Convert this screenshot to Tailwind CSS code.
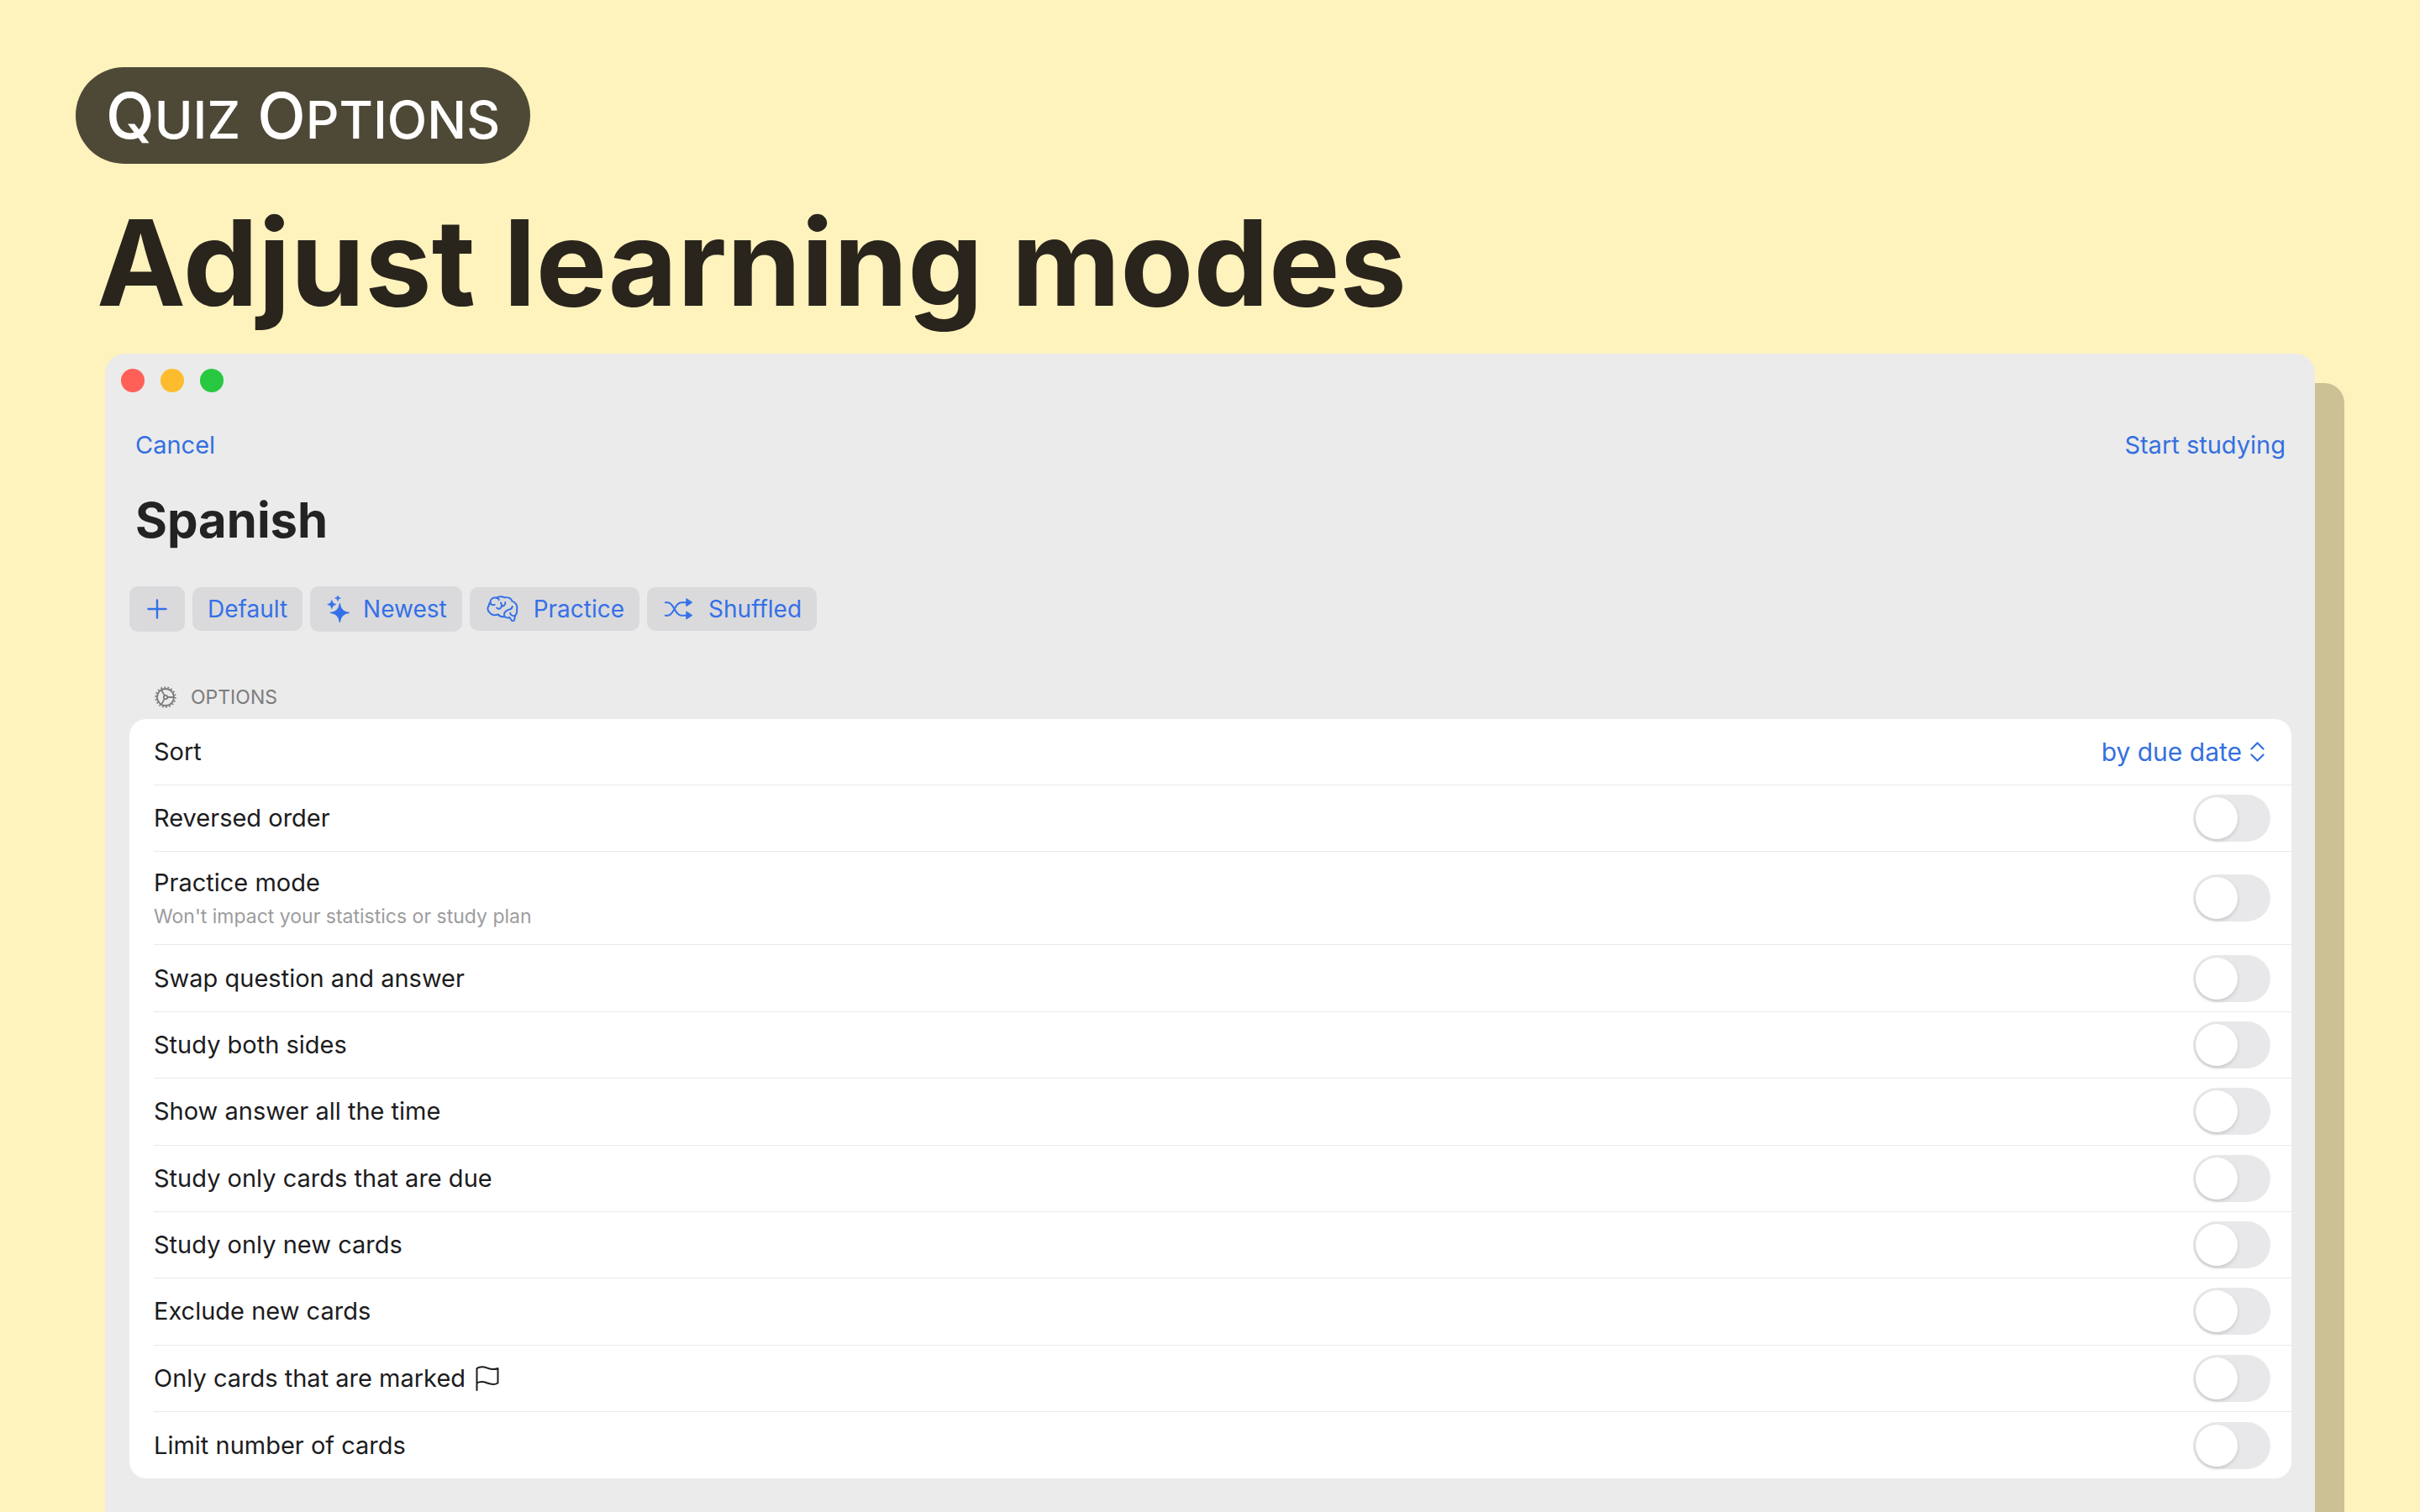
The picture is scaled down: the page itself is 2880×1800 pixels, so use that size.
<!DOCTYPE html>
<html lang="en">
<head>
    <meta charset="UTF-8">
    <meta name="viewport" content="width=device-width, initial-scale=1">
    <title>Quiz Options</title>
    <script src="https://cdn.jsdelivr.net/npm/@tailwindcss/browser@4"></script>
</head>
<body class="flex flex-col h-screen overflow-hidden bg-[#fef2bd] font-['Inter',sans-serif] text-[29px] leading-[36px] text-[#1c1c1e]">
    <header class="px-[90px] pt-20">
        <p class="flex w-fit items-center h-[115px] px-9 rounded-full bg-[#4e4937] text-white text-[75px] leading-none font-medium">
            <span>Q<span class="text-[62px] uppercase">uiz</span> O<span class="text-[62px] uppercase">ptions</span></span>
        </p>
        <h1 class="mt-[37px] px-[25px] text-[142px] leading-[160px] font-bold text-[#29241c]">Adjust learning modes</h1>
    </header>

    <main class="grow mx-[125px] mt-[29px] pl-[29px] pr-7 rounded-t-[24px] bg-[#ebebeb] shadow-[35px_35px_0_#cbc194]">
        <div class="flex gap-[19px] pt-[18px] -ml-[10px]">
            <span class="size-7 rounded-full bg-[#fe5f57]"></span>
            <span class="size-7 rounded-full bg-[#fdbc2e]"></span>
            <span class="size-7 rounded-full bg-[#28c840]"></span>
        </div>

        <nav class="flex justify-between mt-[45px] px-[7px] text-[#3470e0]">
            <button type="button">Cancel</button>
            <button type="button">Start studying</button>
        </nav>

        <h2 class="mt-9 px-[7px] text-[58px] leading-[70px] font-bold text-[#232323]">Spanish</h2>

        <div class="flex items-center gap-[9px] mt-[44px] text-[28px] text-[#3470e8]">
            <button type="button" aria-label="Add preset" class="flex items-center justify-center w-[66px] h-[54px] rounded-[10px] bg-[#dadadc]">
                <svg class="size-6" viewBox="0 0 24 24" fill="none" stroke="currentColor" stroke-width="2.4" stroke-linecap="round"><path d="M12 1.5v21M1.5 12h21"/></svg>
            </button>
            <button type="button" class="h-[52px] px-[18px] rounded-[10px] bg-[#dadadc]">Default</button>
            <button type="button" class="flex items-center gap-4 h-[54px] pl-5 pr-[18px] rounded-[10px] bg-[#dadadc]">
                <svg class="w-[27px] h-8" viewBox="-2 0 79 94" fill="currentColor">
                    <path d="M43 27Q46 57 76 60Q46 63 43 93Q40 63 10 60Q40 57 43 27Z" stroke="currentColor" stroke-width="3" stroke-linejoin="round"/>
                    <path d="M15 16Q17 29 30 31Q17 33 15 46Q13 33 0 31Q13 29 15 16Z" stroke="currentColor" stroke-width="2" stroke-linejoin="round"/>
                    <path d="M36 0Q37 8 46 9Q37 10 36 19Q35 10 26 9Q35 8 36 0Z" stroke="currentColor" stroke-width="2" stroke-linejoin="round"/>
                </svg>
                Newest
            </button>
            <button type="button" class="flex items-center gap-[18px] h-[52px] pl-5 pr-[18px] rounded-[10px] bg-[#dadadc]">
                <svg class="w-[38px] h-8" viewBox="-2 -1 116 97" fill="none" stroke="currentColor" stroke-width="6" stroke-linecap="round" stroke-linejoin="round">
                    <path d="M12 24C10 12 22 4 34 7C42 1 56 1 64 6C76 3 88 9 91 19C104 23 112 36 108 50C110 60 106 68 102 72L99 87C98 91 92 92 89 89L82 78C76 81 68 79 63 75C52 77 44 73 40 67C28 72 14 69 9 60C0 52 1 40 7 35C6 30 8 26 12 24Z"/>
                    <path d="M12 24C13 32 20 35 28 32M34 7C40 8 43 11 43 15M66 23C68 32 60 39 52 36M50 25C55 32 54 43 46 46C41 48 37 46 35 43M63 75C60 64 66 55 76 51C84 48 91 49 92 38M102 72C92 74 84 69 84 62"/>
                </svg>
                Practice
            </button>
            <button type="button" class="flex items-center gap-[18px] h-[52px] pl-5 pr-[18px] rounded-[10px] bg-[#dadadc]">
                <svg class="w-[35px] h-[26px]" viewBox="-2 -1 104 78" fill="none" stroke="currentColor" stroke-width="6" stroke-linecap="round">
                    <path d="M3 15H12C34 15 36 61 60 61H78M3 61H12C34 61 36 15 60 15H78"/>
                    <path d="M78 2V28L98 15ZM78 48V74L98 61Z" fill="currentColor" stroke-width="3" stroke-linejoin="round"/>
                </svg>
                Shuffled
            </button>
        </div>

        <h3 class="flex items-center gap-[17px] mt-16 px-[30px] text-[23px] leading-7 text-[#7c7c7e]">
            <svg class="size-[26px]" viewBox="0 0 26 26" fill="none" stroke="currentColor" stroke-width="1.8">
                <circle cx="13" cy="13" r="10"/>
                <circle cx="13" cy="13" r="11.8" stroke-dasharray="1.8 2.32"/>
                <circle cx="13" cy="13" r="2.2"/>
                <path d="M15.2 13h8M11.9 11.1l-4-7M11.9 14.9l-4 7"/>
            </svg>
            OPTIONS
        </h3>

        <div class="flex flex-col min-h-[904px] mt-3 pl-[29px] rounded-[20px] bg-white divide-y divide-[#e9e9eb]">
            <div class="flex grow items-center justify-between min-h-[79px] pr-8">
                <label for="sort">Sort</label>
                <span class="flex items-center gap-[10px] text-[30px] text-[#3470e0]">
                    <select id="sort" class="appearance-none field-sizing-content bg-transparent">
                        <option>by due date</option>
                        <option>by name</option>
                        <option>by creation date</option>
                    </select>
                    <svg class="w-[17px] h-6" viewBox="0 0 17 24" fill="none" stroke="currentColor" stroke-width="2.2" stroke-linecap="round" stroke-linejoin="round"><path d="M1.5 8.5l7-7 7 7M1.5 15.5l7 7 7-7"/></svg>
                </span>
            </div>
            <label class="flex grow items-center justify-between min-h-[79px] pr-[25px]">
                Reversed order
                <input type="checkbox" class="appearance-none flex items-center w-[92px] h-14 px-[3px] rounded-full bg-[#e8e8ea] before:size-[50px] before:rounded-full before:bg-white before:shadow-[0_2px_4px_#00000026] checked:bg-[#34c759] checked:before:ml-auto">
            </label>
            <label class="flex grow items-center justify-between min-h-[111px] pr-[25px]">
                <span class="pt-1">
                    Practice mode
                    <small class="block mt-1 text-[23px] leading-[36px] text-[#9c9c9e]">Won't impact your statistics or study plan</small>
                </span>
                <input type="checkbox" class="appearance-none flex items-center w-[92px] h-14 px-[3px] rounded-full bg-[#e8e8ea] before:size-[50px] before:rounded-full before:bg-white before:shadow-[0_2px_4px_#00000026] checked:bg-[#34c759] checked:before:ml-auto">
            </label>
            <label class="flex grow items-center justify-between min-h-[79px] pr-[25px]">
                Swap question and answer
                <input type="checkbox" class="appearance-none flex items-center w-[92px] h-14 px-[3px] rounded-full bg-[#e8e8ea] before:size-[50px] before:rounded-full before:bg-white before:shadow-[0_2px_4px_#00000026] checked:bg-[#34c759] checked:before:ml-auto">
            </label>
            <label class="flex grow items-center justify-between min-h-[79px] pr-[25px]">
                Study both sides
                <input type="checkbox" class="appearance-none flex items-center w-[92px] h-14 px-[3px] rounded-full bg-[#e8e8ea] before:size-[50px] before:rounded-full before:bg-white before:shadow-[0_2px_4px_#00000026] checked:bg-[#34c759] checked:before:ml-auto">
            </label>
            <label class="flex grow items-center justify-between min-h-[79px] pr-[25px]">
                Show answer all the time
                <input type="checkbox" class="appearance-none flex items-center w-[92px] h-14 px-[3px] rounded-full bg-[#e8e8ea] before:size-[50px] before:rounded-full before:bg-white before:shadow-[0_2px_4px_#00000026] checked:bg-[#34c759] checked:before:ml-auto">
            </label>
            <label class="flex grow items-center justify-between min-h-[79px] pr-[25px]">
                Study only cards that are due
                <input type="checkbox" class="appearance-none flex items-center w-[92px] h-14 px-[3px] rounded-full bg-[#e8e8ea] before:size-[50px] before:rounded-full before:bg-white before:shadow-[0_2px_4px_#00000026] checked:bg-[#34c759] checked:before:ml-auto">
            </label>
            <label class="flex grow items-center justify-between min-h-[79px] pr-[25px]">
                Study only new cards
                <input type="checkbox" class="appearance-none flex items-center w-[92px] h-14 px-[3px] rounded-full bg-[#e8e8ea] before:size-[50px] before:rounded-full before:bg-white before:shadow-[0_2px_4px_#00000026] checked:bg-[#34c759] checked:before:ml-auto">
            </label>
            <label class="flex grow items-center justify-between min-h-[79px] pr-[25px]">
                Exclude new cards
                <input type="checkbox" class="appearance-none flex items-center w-[92px] h-14 px-[3px] rounded-full bg-[#e8e8ea] before:size-[50px] before:rounded-full before:bg-white before:shadow-[0_2px_4px_#00000026] checked:bg-[#34c759] checked:before:ml-auto">
            </label>
            <label class="flex grow items-center justify-between min-h-[79px] pr-[25px]">
                <span class="flex items-center gap-3">
                    Only cards that are marked
                    <svg class="w-7 h-[30px]" viewBox="0 0 28 30" fill="none" stroke="currentColor" stroke-width="2" stroke-linecap="round" stroke-linejoin="round"><path d="M1.5 29V3C6 0 10 1 14 2.6S22 5 26.5 3V20.5C22 23 18 22 14 20.5S6 18 1.5 20.5"/></svg>
                </span>
                <input type="checkbox" class="appearance-none flex items-center w-[92px] h-14 px-[3px] rounded-full bg-[#e8e8ea] before:size-[50px] before:rounded-full before:bg-white before:shadow-[0_2px_4px_#00000026] checked:bg-[#34c759] checked:before:ml-auto">
            </label>
            <label class="flex grow items-center justify-between min-h-[79px] pr-[25px]">
                Limit number of cards
                <input type="checkbox" class="appearance-none flex items-center w-[92px] h-14 px-[3px] rounded-full bg-[#e8e8ea] before:size-[50px] before:rounded-full before:bg-white before:shadow-[0_2px_4px_#00000026] checked:bg-[#34c759] checked:before:ml-auto">
            </label>
        </div>
    </main>
</body>
</html>
